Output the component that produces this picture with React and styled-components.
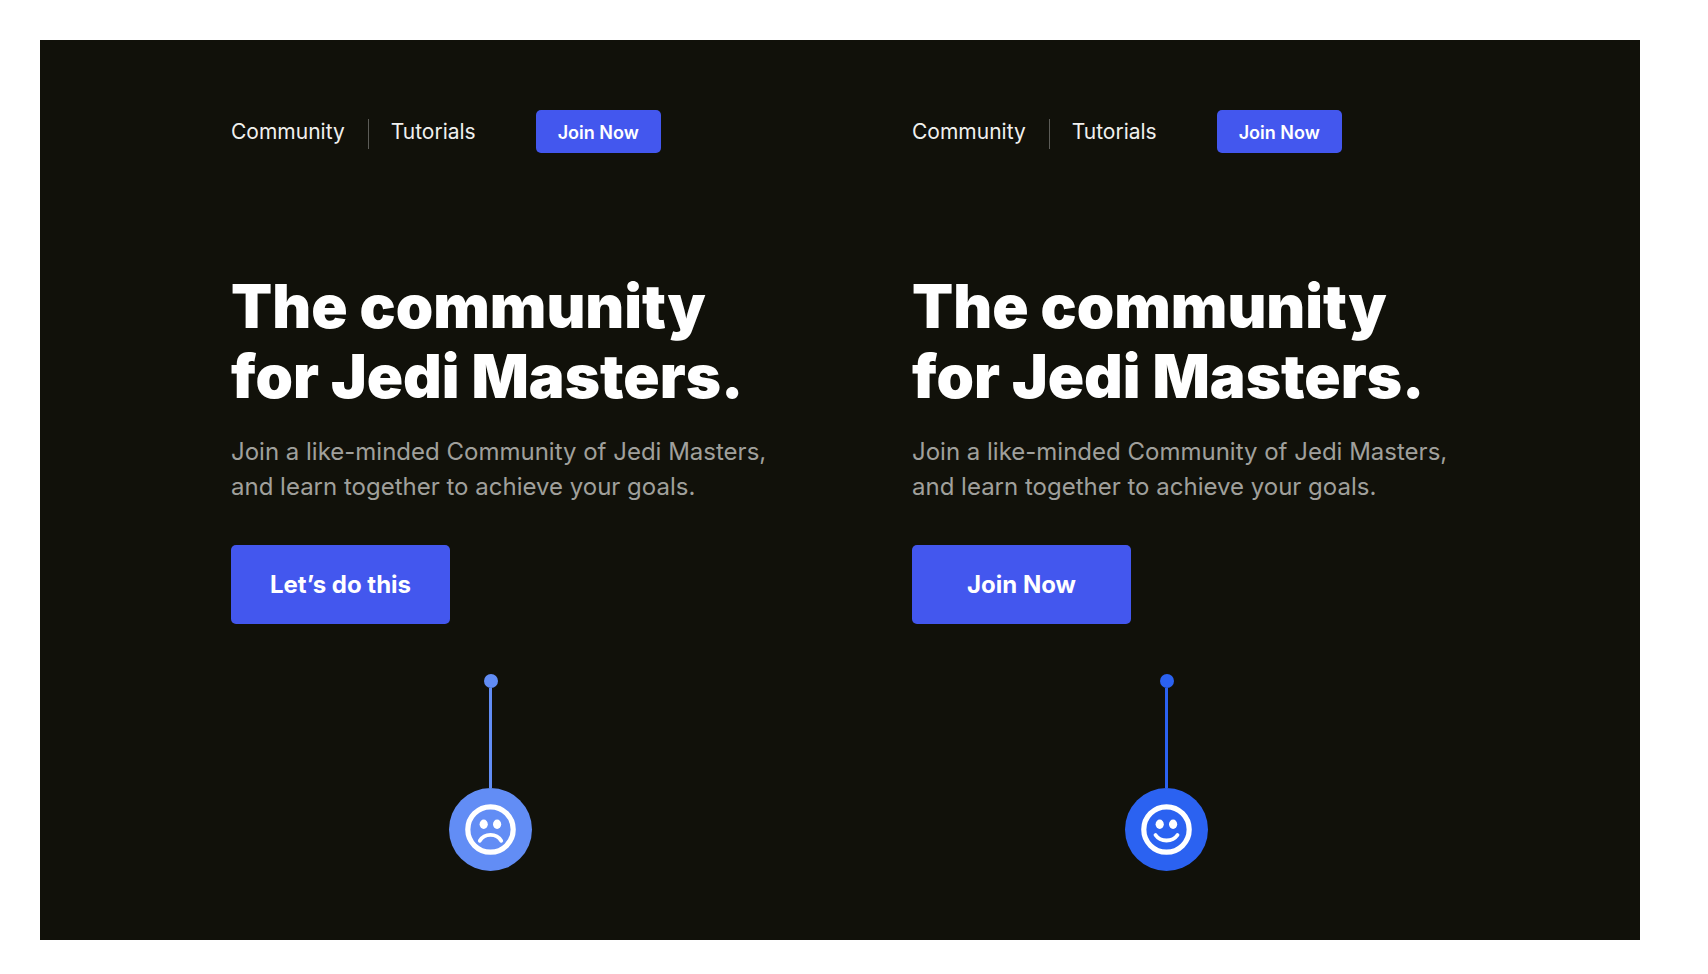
import React from "react";
import styled, { createGlobalStyle } from "styled-components";

const GlobalStyle = createGlobalStyle`
  *, *::before, *::after { box-sizing: border-box; }
  body {
    margin: 0;
    background: #ffffff;
    font-family: Inter, "Liberation Sans", sans-serif;
  }
`;

const Page = styled.div`
  min-height: 100vh;
  padding: 40px 68px 34px 40px;
`;

const Panel = styled.main`
  display: grid;
  grid-template-columns: 1fr 1fr;
  min-height: 900px;
  padding: 70px 47px 48px 191px;
  background: #11110a;
`;

const Example = styled.section`
  display: flex;
  flex-direction: column;
  align-items: flex-start;
`;

const Nav = styled.nav`
  display: flex;
  align-items: center;
`;

const NavLink = styled.a`
  color: #f0f0ee;
  font-size: 21px;
  font-weight: 400;
  line-height: 28px;
  text-decoration: none;
`;

const Divider = styled.span`
  width: 1px;
  height: 30px;
  margin: 4px 22px 0 23px;
  background: #5c5c57;
`;

const Button = styled.button`
  border: 0;
  border-radius: 5px;
  background: #4357ee;
  color: #ffffff;
  font-family: inherit;
  cursor: pointer;
`;

const SmallButton = styled(Button)`
  width: 125px;
  height: 43px;
  margin-left: 60px;
  padding: 1px 0 0;
  font-size: 18px;
  font-weight: 600;
`;

const LargeButton = styled(Button)`
  width: 219px;
  height: 79px;
  padding: 0;
  font-size: 24px;
  font-weight: 700;
`;

const Title = styled.h1`
  margin: 118px 0 0;
  color: #ffffff;
  font-size: 60px;
  font-weight: 900;
  line-height: 70px;
  white-space: nowrap;
`;

const Lead = styled.p`
  margin: 23px 0 41px;
  color: #a0a09c;
  font-size: 24px;
  font-weight: 400;
  line-height: 35px;
  white-space: nowrap;
`;

const Marker = styled.div`
  display: flex;
  flex-direction: column;
  align-items: center;
  margin: 50px 0 0 ${(p) => p.$indent}px;
  color: ${(p) => p.$color};
`;

const Dot = styled.span`
  width: 14px;
  height: 14px;
  border-radius: 50%;
  background: currentColor;
`;

const Stem = styled.span`
  width: 3px;
  height: 100px;
  background: currentColor;
`;

const Badge = styled.span`
  display: grid;
  place-items: center;
  width: 83px;
  height: 83px;
  border-radius: 50%;
  background: currentColor;
`;

const Face = ({ happy }) => (
  <svg width="51" height="51" viewBox="0 0 51 51" fill="none" role="img" aria-label={happy ? "Happy" : "Sad"}>
    <circle cx="25.5" cy="25.5" r="22.7" stroke="#fff" strokeWidth="5.2" />
    <ellipse cx="18.7" cy="20.3" rx="4.1" ry="4.7" fill="#fff" />
    <ellipse cx="32.1" cy="20.3" rx="4.1" ry="4.7" fill="#fff" />
    <path
      d={happy ? "M14.5 31C19.5 38.3 31.5 38.3 36.5 31" : "M14.8 36.8C19.5 29 31.5 29 36.2 36.8"}
      stroke="#fff"
      strokeWidth="3.8"
      strokeLinecap="round"
    />
  </svg>
);

const examples = [
  { action: "Let’s do this", happy: false, color: "#628df5", indent: 218 },
  { action: "Join Now", happy: true, color: "#2b62f1", indent: 213 },
];

export default function App() {
  return (
    <>
      <GlobalStyle />
      <Page>
        <Panel>
          {examples.map(({ action, happy, color, indent }) => (
            <Example key={action}>
              <Nav>
                <NavLink href="#community">Community</NavLink>
                <Divider />
                <NavLink href="#tutorials">Tutorials</NavLink>
                <SmallButton type="button">Join Now</SmallButton>
              </Nav>
              <Title>
                The community
                <br />
                for Jedi Masters.
              </Title>
              <Lead>
                Join a like-minded Community of Jedi Masters,
                <br />
                and learn together to achieve your goals.
              </Lead>
              <LargeButton type="button">{action}</LargeButton>
              <Marker $indent={indent} $color={color}>
                <Dot />
                <Stem />
                <Badge>
                  <Face happy={happy} />
                </Badge>
              </Marker>
            </Example>
          ))}
        </Panel>
      </Page>
    </>
  );
}
